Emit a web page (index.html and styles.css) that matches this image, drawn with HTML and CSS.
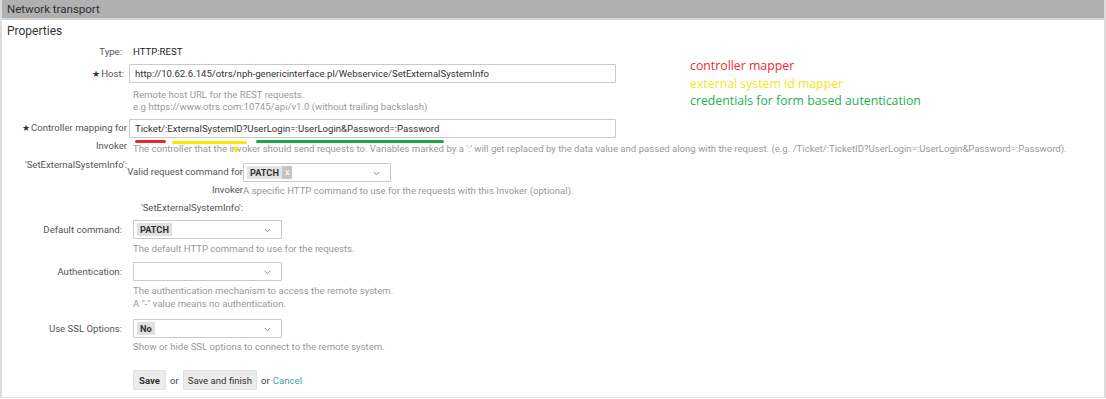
FILE: index.html
```html
<!DOCTYPE html>
<html>
<head>
<meta charset="utf-8">
<link rel="stylesheet" href="styles.css">
</head>
<body>
<div class="panel">
  <div class="header">Network transport</div>
  <div class="body">
    <h2 class="title">Properties</h2>

    <div class="notes">
      <div class="note red">controller mapper</div>
      <div class="note yellow">external system id mapper</div>
      <div class="note green">credentials for form based autentication</div>
    </div>

    <div class="row row-type">
      <div class="lbl">Type:</div>
      <div class="field"><span class="value">HTTP:REST</span></div>
    </div>

    <div class="row row-host">
      <div class="lbl"><span class="star">★</span>Host:</div>
      <div class="field">
        <div class="input">http://10.62.6.145/otrs/nph-genericinterface.pl/Webservice/SetExternalSystemInfo</div>
        <div class="hint hint-host">Remote host URL for the REST requests.<br>e.g https://www.otrs.com:10745/api/v1.0 (without trailing backslash)</div>
      </div>
    </div>

    <div class="row row-ctrl">
      <div class="lbl lbl-wrap"><span class="star">★</span>Controller mapping for Invoker 'SetExternalSystemInfo':</div>
      <div class="field">
        <div class="input">Ticket/:ExternalSystemID?UserLogin=:UserLogin&amp;Password=:Password</div>
        <div class="marks">
          <span class="mark m-red"></span>
          <span class="mark m-yellow"></span>
          <span class="mark m-green"></span>
          <span class="dot"></span>
        </div>
        <div class="hint hint-ctrl">The controller that the invoker should send requests to. Variables marked by a ':' will get replaced by the data value and passed along with the request. (e.g. /Ticket/:TicketID?UserLogin=:UserLogin&amp;Password=:Password).</div>
        <div class="subrow">
          <div class="sublbl">Valid request command for Invoker 'SetExternalSystemInfo':</div>
          <div class="subfield">
            <div class="select sel-valid">
              <span class="token"><span class="token-text">PATCH</span><span class="token-x">x</span></span>
              <svg class="chev" width="7" height="5" viewBox="0 0 7 5"><path d="M0.8 1 L3.5 3.8 L6.2 1" fill="none" stroke="#8a8a8a" stroke-width="1"/></svg>
            </div>
            <div class="hint hint-valid">A specific HTTP command to use for the requests with this Invoker (optional).</div>
          </div>
        </div>
      </div>
    </div>

    <div class="row row-sel row-default">
      <div class="lbl">Default command:</div>
      <div class="field">
        <div class="select"><span class="chosen">PATCH</span>
          <svg class="chev" width="7" height="5" viewBox="0 0 7 5"><path d="M0.8 1 L3.5 3.8 L6.2 1" fill="none" stroke="#8a8a8a" stroke-width="1"/></svg>
        </div>
        <div class="hint hint-sel hint-default">The default HTTP command to use for the requests.</div>
      </div>
    </div>

    <div class="row row-sel row-auth">
      <div class="lbl">Authentication:</div>
      <div class="field">
        <div class="select">
          <svg class="chev" width="7" height="5" viewBox="0 0 7 5"><path d="M0.8 1 L3.5 3.8 L6.2 1" fill="none" stroke="#8a8a8a" stroke-width="1"/></svg>
        </div>
        <div class="hint hint-sel hint-auth">The authentication mechanism to access the remote system.<br>A "-" value means no authentication.</div>
      </div>
    </div>

    <div class="row row-sel row-ssl">
      <div class="lbl">Use SSL Options:</div>
      <div class="field">
        <div class="select"><span class="chosen">No</span>
          <svg class="chev" width="7" height="5" viewBox="0 0 7 5"><path d="M0.8 1 L3.5 3.8 L6.2 1" fill="none" stroke="#8a8a8a" stroke-width="1"/></svg>
        </div>
        <div class="hint hint-sel">Show or hide SSL options to connect to the remote system.</div>
      </div>
    </div>

    <div class="row row-buttons">
      <div class="lbl"></div>
      <div class="field actions">
        <button class="btn btn-save">Save</button>
        <span class="or">or</span>
        <button class="btn">Save and finish</button>
        <span class="or">or</span>
        <a class="cancel">Cancel</a>
      </div>
    </div>
  </div>
</div>
</body>
</html>
```

FILE: styles.css
```css
* { box-sizing: border-box; }
html, body { margin: 0; padding: 0; background: #ffffff; }
body {
  font-family: Roboto, "Liberation Sans", sans-serif;
  font-size: 9.6px;
  color: #555;
  width: 1106px;
  height: 399px;
  overflow: hidden;
}
.panel {
  width: 1106px;
  height: 398px;
  border-left: 2px solid #dcdcdc;
  border-right: 2px solid #dcdcdc;
  border-bottom: 1px solid #e4e4e4;
}
.header {
  height: 20px;
  background: #b0b0b0;
  border-bottom: 2px solid #d4d4d4;
  color: #2f2f2f;
  font-size: 11.5px;
  line-height: 18px;
  padding-left: 5px;
}
.body { position: relative; padding-top: 3px; }
.title {
  margin: 0;
  font-weight: normal;
  font-size: 12px;
  color: #333;
  line-height: 16px;
  padding-left: 5px;
}
.notes {
  position: absolute;
  left: 688px;
  top: 37px;
  font-family: "Open Sans", "Noto Sans", sans-serif;
  font-size: 12.3px;
  line-height: 17.5px;
}
.note.red { color: #ee2a33; }
.note.yellow { color: #f7e51c; }
.note.green { color: #22b24c; }

.row { display: flex; }
.lbl {
  width: 125px;
  flex: none;
  text-align: right;
  color: #555;
  padding-right: 3px;
}
.star { font-size: 8.5px; color: #333; margin-right: 1px; }
.field { flex: 1; min-width: 0; }

.row-type { margin-top: 4px; line-height: 18px; }
.row-type .lbl { padding-right: 5px; }
.value { color: #222; padding-left: 6px; }

.row-host { margin-top: 3px; }
.row-host .lbl { line-height: 19px; }
.input {
  width: 487px;
  height: 19px;
  border: 1px solid #c9c9c9;
  border-radius: 1px;
  background: #fff;
  color: #333;
  line-height: 17px;
  padding-left: 5px;
  margin-left: 2px;
  white-space: nowrap;
  overflow: hidden;
}
.hint { color: #999; padding-left: 6px; }
.hint-host { margin-top: 6px; line-height: 11.5px; }

.row-ctrl { margin-top: 7px; }
.lbl-wrap {
  width: 108px;
  margin-left: 17px;
  padding-right: 0;
  line-height: 18.4px;
  margin-top: 0;
}
.marks { position: relative; height: 6px; margin-top: 2px; }
.mark { position: absolute; top: 0; height: 3px; border-radius: 2px; }
.m-red { left: 8px; width: 31px; background: #e8252c; }
.m-yellow { left: 45px; width: 75px; background: #fde800; top: 1px; }
.m-green { left: 129px; width: 188px; background: #1fa54a; }
.dot { position: absolute; left: 107px; top: 7px; width: 4px; height: 4px; background: #fde800; border-radius: 1px; }
.hint-ctrl { line-height: 11px; white-space: nowrap; padding-left: 6px; margin-top: -3px; }

.subrow { display: flex; margin-top: 9px; }
.sublbl {
  width: 116px;
  flex: none;
  text-align: right;
  line-height: 18px;
}
.subfield { flex: none; }
.select {
  position: relative;
  width: 148px;
  height: 19px;
  border: 1px solid #c9c9c9;
  border-radius: 1px;
  background: #fff;
  padding: 2px 3px;
}
.chev { position: absolute; right: 10px; top: 7px; }
.token {
  display: inline-flex;
  height: 13px;
  background: #e4e4e4;
  align-items: stretch;
}
.token-text { color: #333; font-weight: bold; font-size: 9.2px; line-height: 13px; padding: 0 3px 0 3px; }
.token-x { background: #c4c4c4; color: #fff; font-size: 9px; line-height: 12px; padding: 0 3px; }
.hint-valid { padding-left: 0; line-height: 18px; margin-top: 0; }

.row-default { margin-top: 3px; }
.row-sel .lbl { line-height: 19px; padding-right: 5px; }
.row-sel .field { padding-left: 6px; }
.row-sel .select { width: 149px; }
.chosen {
  display: inline-block;
  background: #e0e0e0;
  color: #333;
  font-weight: bold;
  font-size: 9.2px;
  line-height: 13px;
  padding: 0 3px;
}
.hint-sel { padding-left: 0; margin-top: 3px; line-height: 12.5px; }
.hint-default { margin-top: 4px; }
.row-auth { margin-top: 6px; }
.hint-auth { line-height: 13px; }
.row-ssl { margin-top: 9px; }

.row-buttons { margin-top: 17px; }
.actions { display: flex; align-items: center; padding-left: 6px; }
.btn {
  font-family: Roboto, "Liberation Sans", sans-serif;
  font-size: 9.6px;
  color: #333;
  background: #ececec;
  border: 1px solid #e2e2e2;
  border-radius: 1px;
  height: 20px;
  padding: 0 4px;
  margin: 0;
}
.btn-save { font-weight: bold; padding: 0 5px; }
.or { color: #444; margin: 0 4px; }
.cancel { color: #3f9fb0; margin-left: -1px; }
```
